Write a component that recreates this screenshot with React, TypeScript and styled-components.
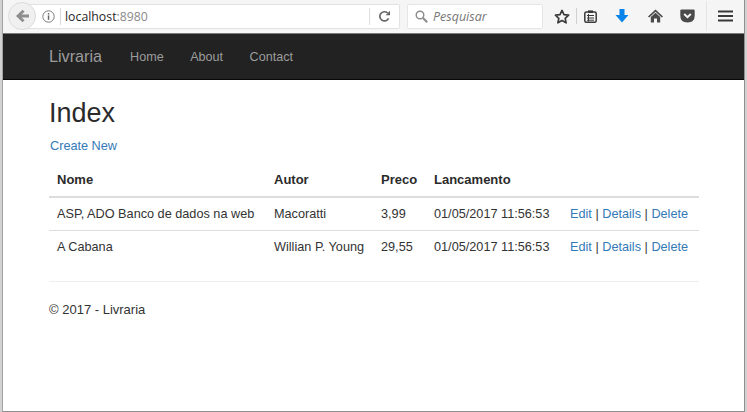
import React from 'react';
import styled, { createGlobalStyle } from 'styled-components';

const GlobalStyle = createGlobalStyle`
  html, body {
    margin: 0;
    padding: 0;
    background-color: #d2d2d2;
  }
`;

const BrowserWindow = styled.div`
  box-sizing: border-box;
  width: 743px;
  height: 412px;
  margin-left: 2px;
  display: flex;
  flex-direction: column;
  background-color: white;
  border-left: 1px solid #a3a3a3;
  border-right: 1px solid #8f8f8f;
  border-bottom: 1px solid #8f8f8f;
  font-family: 'Liberation Sans', Arial, sans-serif;
  overflow: hidden;
`;

const Toolbar = styled.div`
  box-sizing: border-box;
  height: 34px;
  flex: none;
  display: flex;
  align-items: center;
  padding: 0 0 1px 5px;
  background-color: #f5f5f5;
  border-bottom: 1px solid #7b7b7b;
`;

const BackButton = styled.div`
  position: relative;
  z-index: 1;
  box-sizing: border-box;
  width: 28px;
  height: 28px;
  flex: none;
  display: flex;
  align-items: center;
  justify-content: center;
  border-radius: 50%;
  background-color: #f0f0f0;
  border: 1px solid #dcdcdc;
`;

const UrlBar = styled.div`
  box-sizing: border-box;
  width: 373px;
  height: 25px;
  margin-left: -9px;
  padding-left: 15px;
  display: flex;
  align-items: center;
  flex: none;
  background-color: white;
  border: 1px solid #e2e2e2;
  border-left: none;
  border-radius: 0 2px 2px 0;
`;

const UrlDivider = styled.span`
  width: 1px;
  height: 17px;
  margin-left: 5px;
  background-color: #d8d8d8;
`;

const UrlHost = styled.span`
  margin-left: 4px;
  font-family: 'Open Sans', sans-serif;
  font-size: 12.3px;
  color: #1f1f1f;
`;

const UrlPort = styled.span`
  color: #8a8a8a;
`;

const ReloadArea = styled.div`
  margin-left: auto;
  width: 29px;
  height: 17px;
  display: flex;
  align-items: center;
  justify-content: center;
  border-left: 1px solid #dedede;
`;

const SearchBox = styled.div`
  box-sizing: border-box;
  width: 136px;
  height: 25px;
  margin-left: 7px;
  padding-left: 7px;
  flex: none;
  display: flex;
  align-items: center;
  gap: 5px;
  background-color: white;
  border: 1px solid #e6e6e6;
  border-radius: 2px;
`;

const SearchText = styled.span`
  font-family: 'Open Sans', sans-serif;
  font-style: italic;
  font-size: 12.5px;
  color: #777;
`;

const ToolIcons = styled.div`
  display: flex;
  align-items: center;
  height: 100%;
  margin-left: 5px;
`;

const ToolSlot = styled.div<{ $width: number }>`
  width: ${(p) => p.$width}px;
  display: flex;
  align-items: center;
  justify-content: center;
`;

const ToolDivider = styled.span`
  width: 1px;
  height: 16px;
  background-color: #cfcfcf;
`;

const MenuDivider = styled.span`
  width: 1px;
  height: 30px;
  margin-left: 2px;
  background-color: #e4e4e4;
`;

const Navbar = styled.nav`
  box-sizing: border-box;
  height: 46px;
  flex: none;
  display: flex;
  align-items: center;
  padding-left: 46px;
  background-color: #222;
  border-bottom: 1px solid #080808;
`;

const Brand = styled.a`
  font-size: 16.2px;
  color: #9d9d9d;
  margin-right: 28px;
`;

const NavLink = styled.a`
  font-size: 12.6px;
  color: #9d9d9d;
  margin-right: 26.5px;
`;

const Content = styled.main`
  padding: 0 46px;
  color: #333;
  font-size: 12.7px;
`;

const Title = styled.h2`
  margin: 18px 0 0;
  font-size: 27px;
  font-weight: 500;
  line-height: 30px;
  color: #2b2b2b;
`;

const LinkRow = styled.p`
  margin: 9px 0 0;
  padding-left: 1px;
  line-height: 18px;
`;

const BlueLink = styled.a`
  color: #337ab7;
`;

const BooksTable = styled.table`
  width: 650px;
  margin-top: 8px;
  table-layout: fixed;
  border-collapse: collapse;
  border-spacing: 0;
`;

const HeadCell = styled.th<{ $width: number }>`
  width: ${(p) => p.$width}px;
  box-sizing: border-box;
  height: 34px;
  padding: 0 0 0 8px;
  text-align: left;
  font-size: 13px;
  font-weight: 700;
  color: #2b2b2b;
  border-bottom: 2px solid #ddd;
`;

const Cell = styled.td`
  box-sizing: border-box;
  height: 33px;
  padding: 1px 0 0 8px;
  white-space: nowrap;
  border-top: 1px solid #ddd;
`;

const Rule = styled.hr`
  width: 650px;
  margin: 18px 0 0;
  border: none;
  border-top: 1px solid #eee;
`;

const Footer = styled.footer`
  margin-top: 19px;
  font-size: 13px;
  line-height: 18px;
`;

const ArrowBackIcon = () => (
  <svg width="15" height="14" viewBox="0 0 15 14">
    <path d="M7.5 0.8 L1 7 L7.5 13.2 L9.6 11.2 L6.6 8.6 H14 V5.4 H6.6 L9.6 2.8 Z" fill="#8e8e8e" />
  </svg>
);

const InfoIcon = () => (
  <svg width="13" height="13" viewBox="0 0 13 13" fill="none">
    <circle cx="6.5" cy="6.5" r="5.7" stroke="#7a7a7a" />
    <rect x="5.8" y="5.4" width="1.5" height="4.4" fill="#666" />
    <rect x="5.8" y="3" width="1.5" height="1.5" fill="#666" />
  </svg>
);

const ReloadIcon = () => (
  <svg width="13" height="13" viewBox="0 0 13 13" fill="none">
    <path d="M10.6 8.3 A4.6 4.6 0 1 1 9.6 3" stroke="#666" strokeWidth="1.7" />
    <path d="M7.6 5.2 H12 V0.8 Z" fill="#666" />
  </svg>
);

const SearchIcon = () => (
  <svg width="13" height="13" viewBox="0 0 13 13" fill="none">
    <circle cx="5" cy="5" r="3.8" stroke="#8a8a8a" strokeWidth="1.4" />
    <path d="M8 8 L12.2 12.2" stroke="#8a8a8a" strokeWidth="2" />
  </svg>
);

const StarIcon = () => (
  <svg width="16" height="15" viewBox="0 0 16 15" fill="none">
    <path
      d="M8 1.4 L10 5.6 L14.6 6.2 L11.2 9.3 L12.1 13.8 L8 11.6 L3.9 13.8 L4.8 9.3 L1.4 6.2 L6 5.6 Z"
      stroke="#3a3a3a"
      strokeWidth="1.7"
      strokeLinejoin="round"
    />
  </svg>
);

const ClipboardIcon = () => (
  <svg width="13" height="13" viewBox="0 0 13 13" fill="none">
    <rect x="0.8" y="2" width="11.4" height="10.2" rx="1.5" stroke="#3a3a3a" strokeWidth="1.5" />
    <rect x="4" y="0.4" width="5" height="2.6" fill="#3a3a3a" />
    <path d="M3 5.5 H10 M3 8 H10 M3 10.2 H10" stroke="#3a3a3a" />
    <path d="M4.5 4 V11.5" stroke="#3a3a3a" />
  </svg>
);

const DownloadIcon = () => (
  <svg width="14" height="14" viewBox="0 0 14 14">
    <path d="M4.5 0 H9.5 V6 H13.5 L7 13.5 L0.5 6 H4.5 Z" fill="#0a84e8" />
  </svg>
);

const HomeIcon = () => (
  <svg width="15" height="14" viewBox="0 0 15 14">
    <path d="M7.5 0.5 L15 7.4 L13.8 8.4 L7.5 2.8 L1.2 8.4 L0 7.4 Z" fill="#4a4a4a" />
    <path d="M2.8 8 L7.5 3.8 L12.2 8 V13.5 H9 V9.5 H6 V13.5 H2.8 Z" fill="#4a4a4a" />
  </svg>
);

const PocketIcon = () => (
  <svg width="15" height="14" viewBox="0 0 15 14">
    <path d="M1.5 0.5 H13.5 Q14.7 0.5 14.7 1.8 V6.5 Q14.7 13.5 7.5 13.5 Q0.3 13.5 0.3 6.5 V1.8 Q0.3 0.5 1.5 0.5 Z" fill="#4a4a4a" />
    <path d="M4.2 5 L7.5 8.2 L10.8 5" stroke="#f5f5f5" strokeWidth="2" fill="none" />
  </svg>
);

const MenuIcon = () => (
  <svg width="15" height="12" viewBox="0 0 15 12">
    <path d="M0 0.5 H15 V2.5 H0 Z M0 5 H15 V7 H0 Z M0 9.5 H15 V11.5 H0 Z" fill="#3a3a3a" />
  </svg>
);

const books = [
  { nome: 'ASP, ADO Banco de dados na web', autor: 'Macoratti', preco: '3,99', lancamento: '01/05/2017 11:56:53' },
  { nome: 'A Cabana', autor: 'Willian P. Young', preco: '29,55', lancamento: '01/05/2017 11:56:53' }
];

export default function App(): JSX.Element {
  return (
    <>
      <GlobalStyle />
      <BrowserWindow>
        <Toolbar>
          <BackButton>
            <ArrowBackIcon />
          </BackButton>
          <UrlBar>
            <InfoIcon />
            <UrlDivider />
            <UrlHost>
              localhost<UrlPort>:8980</UrlPort>
            </UrlHost>
            <ReloadArea>
              <ReloadIcon />
            </ReloadArea>
          </UrlBar>
          <SearchBox>
            <SearchIcon />
            <SearchText>Pesquisar</SearchText>
          </SearchBox>
          <ToolIcons>
            <ToolSlot $width={28}>
              <StarIcon />
            </ToolSlot>
            <ToolDivider />
            <ToolSlot $width={27}>
              <ClipboardIcon />
            </ToolSlot>
            <ToolSlot $width={36}>
              <DownloadIcon />
            </ToolSlot>
            <ToolSlot $width={30}>
              <HomeIcon />
            </ToolSlot>
            <ToolSlot $width={34}>
              <PocketIcon />
            </ToolSlot>
            <MenuDivider />
            <ToolSlot $width={36}>
              <MenuIcon />
            </ToolSlot>
          </ToolIcons>
        </Toolbar>

        <Navbar>
          <Brand>Livraria</Brand>
          <NavLink>Home</NavLink>
          <NavLink>About</NavLink>
          <NavLink>Contact</NavLink>
        </Navbar>

        <Content>
          <Title>Index</Title>
          <LinkRow>
            <BlueLink>Create New</BlueLink>
          </LinkRow>
          <BooksTable>
            <thead>
              <tr>
                <HeadCell $width={217}>Nome</HeadCell>
                <HeadCell $width={107}>Autor</HeadCell>
                <HeadCell $width={53}>Preco</HeadCell>
                <HeadCell $width={136}>Lancamento</HeadCell>
                <HeadCell $width={137} />
              </tr>
            </thead>
            <tbody>
              {books.map((book) => (
                <tr key={book.nome}>
                  <Cell>{book.nome}</Cell>
                  <Cell>{book.autor}</Cell>
                  <Cell>{book.preco}</Cell>
                  <Cell>{book.lancamento}</Cell>
                  <Cell>
                    <BlueLink>Edit</BlueLink> | <BlueLink>Details</BlueLink> | <BlueLink>Delete</BlueLink>
                  </Cell>
                </tr>
              ))}
            </tbody>
          </BooksTable>
          <Rule />
          <Footer>© 2017 - Livraria</Footer>
        </Content>
      </BrowserWindow>
    </>
  );
}
